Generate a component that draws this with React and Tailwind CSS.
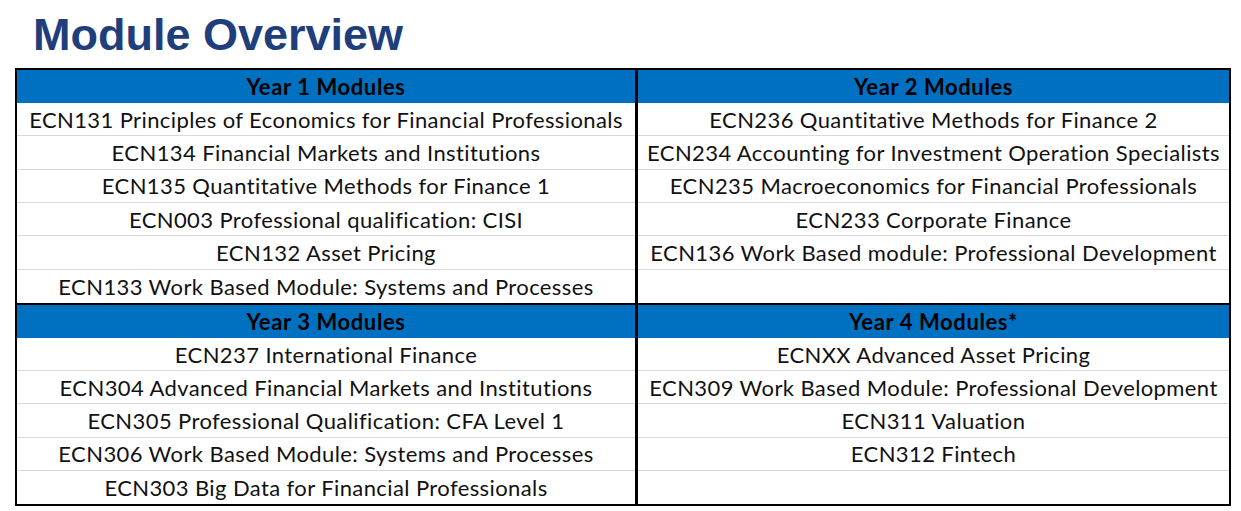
import React from "react";

const top = {
  left: {
    title: "Year 1 Modules",
    rows: [
      "ECN131 Principles of Economics for Financial Professionals",
      "ECN134 Financial Markets and Institutions",
      "ECN135 Quantitative Methods for Finance 1",
      "ECN003 Professional qualification: CISI",
      "ECN132 Asset Pricing",
      "ECN133 Work Based Module: Systems and Processes",
    ],
  },
  right: {
    title: "Year 2 Modules",
    rows: [
      "ECN236 Quantitative Methods for Finance 2",
      "ECN234 Accounting for Investment Operation Specialists",
      "ECN235 Macroeconomics for Financial Professionals",
      "ECN233 Corporate Finance",
      "ECN136 Work Based module: Professional Development",
      "",
    ],
  },
};

const bottom = {
  left: {
    title: "Year 3 Modules",
    rows: [
      "ECN237 International Finance",
      "ECN304 Advanced Financial Markets and Institutions",
      "ECN305 Professional Qualification: CFA Level 1",
      "ECN306 Work Based Module: Systems and Processes",
      "ECN303 Big Data for Financial Professionals",
    ],
  },
  right: {
    title: "Year 4 Modules*",
    rows: [
      "ECNXX Advanced Asset Pricing",
      "ECN309 Work Based Module: Professional Development",
      "ECN311 Valuation",
      "ECN312 Fintech",
      "",
    ],
  },
};

function Column({ data, rowH, divider }) {
  return (
    <div className={divider ? "border-l-[3px] border-black flex flex-col" : "flex flex-col"}>
      <div className="h-[33px] bg-[#0070c0] flex items-center justify-center font-bold text-[22px] tracking-[0.6px] text-black">
        {data.title}
      </div>
      {data.rows.map((r, i) => (
        <div
          key={i}
          className={
            (i < data.rows.length - 1 ? "border-b border-[#d9d9d9] " : "") +
            "flex items-center justify-center text-[22px] tracking-[0.4px] text-[#111] whitespace-nowrap"
          }
          style={{ height: rowH }}
        >
          {r}
        </div>
      ))}
    </div>
  );
}

export default function App() {
  return (
    <div className="w-[1241px] h-[511px] bg-white overflow-hidden">
      <h1
        className="pl-[33px] pt-[9px] h-[68px] text-[45px] leading-[52px] font-bold text-[#1f3e7c]"
        style={{ fontFamily: '"Liberation Sans", Arial, sans-serif' }}
      >
        Module Overview
      </h1>
      <div
        className="ml-[15px] w-[1216px] border-2 border-black"
        style={{ fontFamily: 'Lato, "Noto Sans", sans-serif' }}
      >
        <div className="grid grid-cols-[618px_1fr]">
          <Column data={top.left} rowH={33.33} />
          <Column data={top.right} rowH={33.33} divider />
        </div>
        <div className="grid grid-cols-[618px_1fr] border-t-2 border-black">
          <Column data={bottom.left} rowH={33.2} />
          <Column data={bottom.right} rowH={33.2} divider />
        </div>
      </div>
    </div>
  );
}
